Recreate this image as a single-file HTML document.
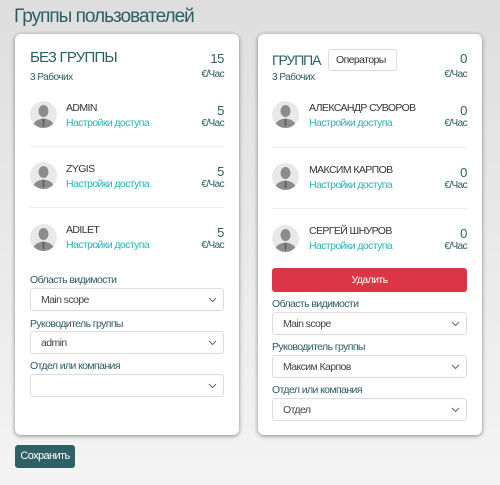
<!DOCTYPE html>
<html><head><meta charset="utf-8"><style>
*{box-sizing:border-box;margin:0;padding:0}
body{width:500px;height:485px;overflow:hidden;position:relative;font-family:"Liberation Sans",sans-serif;background:linear-gradient(#dedede,#f4f4f4);color:#333;letter-spacing:-0.4px}
.a{position:absolute;white-space:nowrap}
h1{position:absolute;left:14px;top:6px;font-size:19px;font-weight:normal;color:#2d5e62;letter-spacing:-1px}
.card{position:absolute;top:34px;width:224px;height:401px;background:#fff;border-radius:6px;box-shadow:0 1px 4px rgba(0,0,0,.45)}
.t{font-size:15px;color:#2d5e62;letter-spacing:-0.8px}
.num{font-size:13px;color:#2d5e62;text-align:right}
.eu{font-size:10px;color:#2d5e62;text-align:right;letter-spacing:-0.6px}
.sm{font-size:10px;color:#2d5e62;letter-spacing:-0.5px}
.nm{font-size:10.5px;color:#333;letter-spacing:-0.6px}
.lk{font-size:10.5px;color:#26b5b5;letter-spacing:-0.6px}
.av{position:absolute;width:27px;height:27px;border-radius:50%;background:#e8e8e8;overflow:hidden}
.sep{position:absolute;height:1px;background:#ececec}
.lb{font-size:10.5px;color:#2d5e62;letter-spacing:-0.6px}
.sel{position:absolute;height:23px;border:1px solid #ddd;border-radius:3px;font-size:10.5px;color:#444;padding:5px 10px;letter-spacing:-0.6px}
.sel svg{position:absolute;right:6px;top:8px}
</style></head><body>
<h1>Группы пользователей</h1>

<div class="card" style="left:15px"></div>
<div class="card" style="left:258px"></div>

<div class="a t" style="left:30px;top:49px">БЕЗ ГРУППЫ</div>
<div class="a num" style="right:276px;top:51px">15</div>
<div class="a eu" style="right:276px;top:69px">€/Час</div>
<div class="a sm" style="left:30px;top:72px">3 Рабочих</div>

<div class="a t" style="left:272px;top:52px;font-size:14px;letter-spacing:-1.1px">ГРУППА</div>
<div class="a" style="left:328px;top:49px;width:69px;height:22px;border:1px solid #ddd;border-radius:3px;font-size:10.5px;padding:4px 7px;color:#333;letter-spacing:-0.6px">Операторы</div>
<div class="a num" style="right:33px;top:51px">0</div>
<div class="a eu" style="right:33px;top:69px">€/Час</div>
<div class="a sm" style="left:272px;top:72px">3 Рабочих</div>

<svg width="0" height="0" style="position:absolute"><defs><g id="p"><ellipse cx="13.5" cy="10" rx="5" ry="6" fill="#8c8c8c"/><path d="M2 28 Q3 18.5 13.5 17.5 Q24 18.5 25 28Z" fill="#8c8c8c"/><path d="M12.6 18 L14.4 18 L14.2 25 L12.8 25Z" fill="#5a5a5a"/></g></defs></svg>

<div class="av" style="left:30px;top:101px"><svg width="27" height="27"><use href="#p"/></svg></div>
<div class="a nm" style="left:66px;top:102px">ADMIN</div>
<div class="a lk" style="left:66px;top:117px">Настройки доступа</div>
<div class="a num" style="right:276px;top:103px">5</div>
<div class="a eu" style="right:276px;top:118px">€/Час</div>
<div class="sep" style="left:30px;width:194px;top:146px"></div>

<div class="av" style="left:30px;top:162px"><svg width="27" height="27"><use href="#p"/></svg></div>
<div class="a nm" style="left:66px;top:163px">ZYGIS</div>
<div class="a lk" style="left:66px;top:178px">Настройки доступа</div>
<div class="a num" style="right:276px;top:164px">5</div>
<div class="a eu" style="right:276px;top:179px">€/Час</div>
<div class="sep" style="left:30px;width:194px;top:207px"></div>

<div class="av" style="left:30px;top:224px"><svg width="27" height="27"><use href="#p"/></svg></div>
<div class="a nm" style="left:66px;top:224px">ADILET</div>
<div class="a lk" style="left:66px;top:239px">Настройки доступа</div>
<div class="a num" style="right:276px;top:225px">5</div>
<div class="a eu" style="right:276px;top:240px">€/Час</div>

<div class="av" style="left:272px;top:101px"><svg width="27" height="27"><use href="#p"/></svg></div>
<div class="a nm" style="left:309px;top:102px">АЛЕКСАНДР СУВОРОВ</div>
<div class="a lk" style="left:309px;top:117px">Настройки доступа</div>
<div class="a num" style="right:33px;top:103px">0</div>
<div class="a eu" style="right:33px;top:118px">€/Час</div>
<div class="sep" style="left:272px;width:195px;top:147px"></div>

<div class="av" style="left:272px;top:163px"><svg width="27" height="27"><use href="#p"/></svg></div>
<div class="a nm" style="left:309px;top:164px">МАКСИМ КАРПОВ</div>
<div class="a lk" style="left:309px;top:179px">Настройки доступа</div>
<div class="a num" style="right:33px;top:165px">0</div>
<div class="a eu" style="right:33px;top:180px">€/Час</div>
<div class="sep" style="left:272px;width:195px;top:208px"></div>

<div class="av" style="left:272px;top:225px"><svg width="27" height="27"><use href="#p"/></svg></div>
<div class="a nm" style="left:309px;top:225px">СЕРГЕЙ ШНУРОВ</div>
<div class="a lk" style="left:309px;top:240px">Настройки доступа</div>
<div class="a num" style="right:33px;top:226px">0</div>
<div class="a eu" style="right:33px;top:241px">€/Час</div>

<div class="a" style="left:272px;top:268px;width:195px;height:24px;background:#dc3545;border-radius:3px;color:#fff;font-size:10.5px;text-align:center;line-height:24px;letter-spacing:-0.6px">Удалить</div>

<div class="a lb" style="left:30px;top:274px">Область видимости</div>
<div class="sel" style="left:30px;top:288px;width:194px">Main scope<svg width="9" height="6"><path d="M1 1L4.5 4.5L8 1" stroke="#666" fill="none"/></svg></div>
<div class="a lb" style="left:30px;top:318px">Руководитель группы</div>
<div class="sel" style="left:30px;top:331px;width:194px">admin<svg width="9" height="6"><path d="M1 1L4.5 4.5L8 1" stroke="#666" fill="none"/></svg></div>
<div class="a lb" style="left:30px;top:360px">Отдел или компания</div>
<div class="sel" style="left:30px;top:374px;width:194px"><svg width="9" height="6"><path d="M1 1L4.5 4.5L8 1" stroke="#666" fill="none"/></svg></div>

<div class="a lb" style="left:272px;top:298px">Область видимости</div>
<div class="sel" style="left:272px;top:312px;width:195px">Main scope<svg width="9" height="6"><path d="M1 1L4.5 4.5L8 1" stroke="#666" fill="none"/></svg></div>
<div class="a lb" style="left:272px;top:341px">Руководитель группы</div>
<div class="sel" style="left:272px;top:355px;width:195px">Максим Карпов<svg width="9" height="6"><path d="M1 1L4.5 4.5L8 1" stroke="#666" fill="none"/></svg></div>
<div class="a lb" style="left:272px;top:384px">Отдел или компания</div>
<div class="sel" style="left:272px;top:398px;width:195px">Отдел<svg width="9" height="6"><path d="M1 1L4.5 4.5L8 1" stroke="#666" fill="none"/></svg></div>

<div class="a" style="left:15px;top:445px;width:60px;height:23px;background:#2d6163;border-radius:3px;color:#fff;font-size:11px;text-align:center;line-height:23px;letter-spacing:-0.6px">Сохранить</div>
</body></html>
